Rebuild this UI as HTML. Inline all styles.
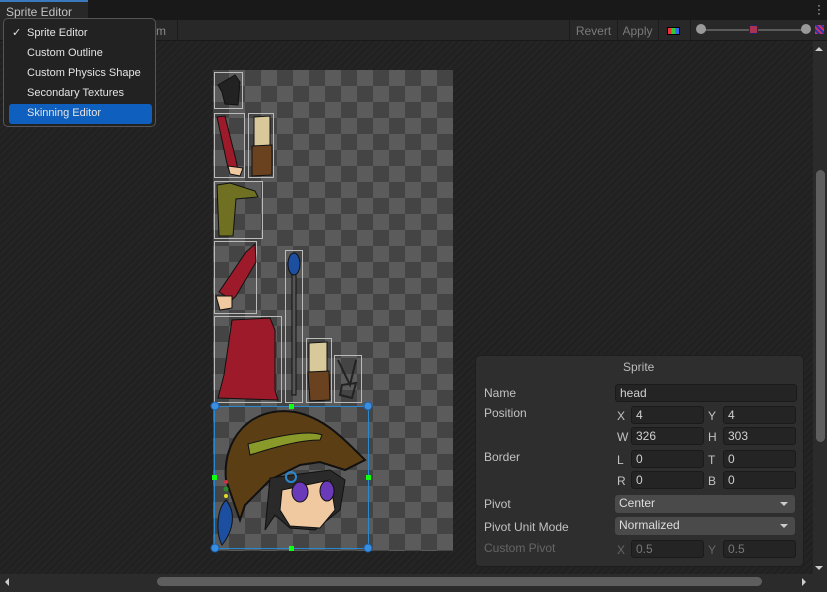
<!DOCTYPE html>
<html><head><meta charset="utf-8"><style>
*{margin:0;padding:0;box-sizing:border-box}
body{width:827px;height:592px;overflow:hidden;background:#232323;font-family:"Liberation Sans",sans-serif;font-size:12px;color:#c8c8c8;position:relative}
.bg{position:absolute;left:0;top:41px;width:827px;height:551px;background:repeating-linear-gradient(135deg,#242424 0 3px,#202020 3px 5px)}
.abs{position:absolute}
.tabbar{left:0;top:0;width:827px;height:20px;background:#191919}
.tab{left:0;top:0;width:88px;height:20px;background:#282828;border-top:2px solid #3a79bb;color:#c4c4c4;font-size:12px;padding:3px 0 0 6px}
.tool{left:0;top:20px;width:827px;height:21px;background:#282828;border-bottom:1px solid #191919}
.btn{top:20px;height:20px;color:#7a7a7a;font-size:12px;padding-top:4px;border-left:1px solid #1c1c1c}
.checker{left:213px;top:70px;width:240px;height:481px;background-color:#444;background-image:conic-gradient(#5b5b5b 25%,#444 0 50%,#5b5b5b 0 75%,#444 0);background-size:32px 32px}
.menu{left:3px;top:18px;width:153px;height:109px;background:#222;border:1px solid #555;border-radius:5px}
.mi{position:absolute;left:23px;color:#e4e4e4;font-size:11px}
.panel{left:475px;top:355px;width:329px;height:212px;background:#2e2e2e;border:1px solid #1e1e1e;border-radius:5px}
.lbl{position:absolute;font-size:12px;color:#c2c2c2}
.fld{position:absolute;height:18px;background:#2a2a2a;background:#242424;border:1px solid #1a1a1a;border-radius:3px;font-size:12px;color:#d0d0d0;padding:1px 0 0 4px}
.dd{position:absolute;height:18px;background:#4a4a4a;border-radius:3px;font-size:12px;color:#ddd;padding:1px 0 0 4px}
.dd:after{content:"";position:absolute;right:7px;top:7px;border:4px solid transparent;border-top:4px solid #ccc;border-bottom:0}
</style></head><body>
<div class="bg"></div>
<div class="abs tabbar"></div>
<div class="abs tab">Sprite Editor</div>
<div class="abs" style="right:6px;top:3px;color:#ccc;font-size:12px;line-height:4px">·<br>·<br>·</div>
<div class="abs tool"></div>
<div class="abs btn" style="left:156px;width:22px;border-left:0;border-right:1px solid #1c1c1c;color:#8a8a8a">m</div>
<div class="abs btn" style="left:569px;width:48px;text-align:center">Revert</div>
<div class="abs btn" style="left:617px;width:40px;text-align:center">Apply</div>
<div class="abs btn" style="left:658px;width:33px;border-right:1px solid #1c1c1c"></div>
<div class="abs" style="left:667px;top:27px;width:13px;height:8px;border:1px solid #000;background:linear-gradient(90deg,#e33 0 33%,#3c3 33% 66%,#36e 66%)"></div>
<div class="abs" style="left:700px;top:29px;width:110px;height:2px;background:#5a5a5a"></div>
<div class="abs" style="left:696px;top:24px;width:10px;height:10px;border-radius:50%;background:#999"></div>
<div class="abs" style="left:749px;top:25px;width:9px;height:9px;background:#a35;border:1px solid #226"></div>
<div class="abs" style="left:801px;top:24px;width:10px;height:10px;border-radius:50%;background:#999"></div>
<div class="abs" style="left:815px;top:25px;width:9px;height:9px;background:repeating-linear-gradient(45deg,#c36 0 2px,#33a 2px 4px)"></div>

<div class="abs checker"></div>
<svg class="abs" style="left:205px;top:65px" width="180" height="495" viewBox="205 65 180 495">
<g fill="none" stroke="#bbb" stroke-width="1">
<rect x="214.5" y="72.5" width="28" height="36"/>
<rect x="214.5" y="113.5" width="30" height="64"/>
<rect x="248.5" y="113.5" width="25" height="64"/>
<rect x="214.5" y="181.5" width="48" height="57"/>
<rect x="214.5" y="241.5" width="42" height="72"/>
<rect x="214.5" y="316.5" width="67" height="86"/>
<rect x="285.5" y="250.5" width="17" height="152"/>
<rect x="306.5" y="338.5" width="25" height="64"/>
<rect x="334.5" y="355.5" width="27" height="47"/>
</g>
<path d="M218 85 L235 75 L240 82 L238 105 L225 104 L222 92 Z" fill="#222" stroke="#111"/>
<path d="M217 117 L225 116 L236 160 L238 170 L228 168 Z" fill="#9c1a2a" stroke="#111"/>
<path d="M228 166 L243 168 L240 176 L230 174 Z" fill="#f0c9a0" stroke="#111"/>
<path d="M254 117 L270 116 L270 146 L254 147 Z" fill="#d8c89a" stroke="#111"/>
<path d="M252 146 L272 145 L272 175 L252 176 Z" fill="#6b4220" stroke="#111"/>
<path d="M217 185 L230 183 L255 191 L258 197 L236 199 L233 236 L219 236 Z" fill="#6f7022" stroke="#111"/>
<path d="M255 244 L256 262 L236 296 L232 300 L219 292 L246 252 Z" fill="#9c1a2a" stroke="#111"/>
<path d="M216 296 L232 296 L232 308 L220 310 Z" fill="#f0c9a0" stroke="#111"/>
<path d="M232 320 L270 318 L275 330 L275 390 L278 400 L218 398 L224 375 Z" fill="#9c1a2a" stroke="#111"/>
<rect x="292" y="270" width="4" height="125" fill="#555" stroke="#111"/>
<ellipse cx="294" cy="264" rx="6" ry="11" fill="#1c4fa0" stroke="#111"/>
<path d="M309 343 L327 342 L327 372 L309 373 Z" fill="#d8c89a" stroke="#111"/>
<path d="M308 372 L329 371 L330 400 L310 401 Z" fill="#6b4220" stroke="#111"/>
<path d="M338 360 L350 385 L356 360 M342 385 L356 383 L352 398 L340 395 Z" fill="none" stroke="#222" stroke-width="2"/>
<path d="M226 480 C222 440 250 405 295 412 C325 418 345 440 365 460 L345 470 L320 462 L300 465 L270 480 L245 505 L240 520 Z" fill="#5c3e14" stroke="#111" stroke-width="2"/>
<path d="M248 444 C280 435 310 430 322 435 L320 440 C300 440 275 447 250 455 Z" fill="#8a9a2a" stroke="#111"/>
<path d="M270 478 L330 470 L345 480 L340 510 L315 530 L290 528 L275 515 L265 530 Z" fill="#2a2a2a" stroke="#111"/>
<path d="M282 490 L330 480 L335 510 L320 528 L290 526 L280 510 Z" fill="#f0c9a0" stroke="#111"/>
<ellipse cx="300" cy="492" rx="8" ry="10" fill="#6a3ab8" stroke="#111"/>
<ellipse cx="327" cy="491" rx="7" ry="10" fill="#6a3ab8" stroke="#111"/>
<path d="M226 500 C216 510 216 535 222 545 C234 530 236 512 226 500 Z" fill="#1c4fa0" stroke="#111"/>
<circle cx="226" cy="489" r="2.5" fill="#2a8a2a"/><circle cx="226" cy="496" r="2" fill="#dd2"/><circle cx="226" cy="482" r="2" fill="#c34"/>
<rect x="214.5" y="406.5" width="154" height="142" fill="none" stroke="#2a88d0" stroke-width="1"/>
<g fill="#3a8ee0" stroke="#1a5fa8"><circle cx="215" cy="406" r="4"/><circle cx="368" cy="406" r="4"/><circle cx="215" cy="548" r="4"/><circle cx="368" cy="548" r="4"/></g>
<g fill="#1f1"><rect x="289" y="404" width="5" height="5"/><rect x="289" y="546" width="5" height="5"/><rect x="212" y="475" width="5" height="5"/><rect x="366" y="475" width="5" height="5"/></g>
<circle cx="291" cy="477" r="5" fill="none" stroke="#2a88d0" stroke-width="2"/>
</svg>

<div class="abs menu">
<div class="mi" style="left:8px;top:7px">✓</div>
<div class="mi" style="top:8px">Sprite Editor</div>
<div class="mi" style="top:28px">Custom Outline</div>
<div class="mi" style="top:48px">Custom Physics Shape</div>
<div class="mi" style="top:68px">Secondary Textures</div>
<div class="abs" style="left:5px;top:85px;width:143px;height:20px;background:#0f5fbf;border-radius:3px"></div>
<div class="mi" style="top:88px">Skinning Editor</div>
</div>

<div class="abs panel">
<div class="lbl" style="left:147px;top:4px;color:#bbb">Sprite</div>
<div class="lbl" style="left:8px;top:30px">Name</div>
<div class="fld" style="left:139px;top:28px;width:182px">head</div>
<div class="lbl" style="left:8px;top:50px">Position</div>
<div class="lbl" style="left:141px;top:53px">X</div><div class="fld" style="left:155px;top:50px;width:73px">4</div>
<div class="lbl" style="left:232px;top:53px">Y</div><div class="fld" style="left:247px;top:50px;width:73px">4</div>
<div class="lbl" style="left:141px;top:74px">W</div><div class="fld" style="left:155px;top:71px;width:73px">326</div>
<div class="lbl" style="left:232px;top:74px">H</div><div class="fld" style="left:247px;top:71px;width:73px">303</div>
<div class="lbl" style="left:8px;top:94px">Border</div>
<div class="lbl" style="left:141px;top:97px">L</div><div class="fld" style="left:155px;top:94px;width:73px">0</div>
<div class="lbl" style="left:232px;top:97px">T</div><div class="fld" style="left:247px;top:94px;width:73px">0</div>
<div class="lbl" style="left:141px;top:118px">R</div><div class="fld" style="left:155px;top:115px;width:73px">0</div>
<div class="lbl" style="left:232px;top:118px">B</div><div class="fld" style="left:247px;top:115px;width:73px">0</div>
<div class="lbl" style="left:8px;top:141px">Pivot</div>
<div class="dd" style="left:139px;top:139px;width:180px">Center</div>
<div class="lbl" style="left:8px;top:164px">Pivot Unit Mode</div>
<div class="dd" style="left:139px;top:161px;width:180px">Normalized</div>
<div class="lbl" style="left:8px;top:185px;color:#666">Custom Pivot</div>
<div class="lbl" style="left:141px;top:187px;color:#666">X</div><div class="fld" style="left:155px;top:184px;width:73px;color:#777">0.5</div>
<div class="lbl" style="left:232px;top:187px;color:#666">Y</div><div class="fld" style="left:247px;top:184px;width:73px;color:#777">0.5</div>
</div>

<div class="abs" style="left:813px;top:41px;width:14px;height:533px;background:#2b2b2b"></div>
<div class="abs" style="left:816px;top:170px;width:9px;height:272px;background:#5e5e5e;border-radius:5px"></div>
<div class="abs" style="left:815px;top:47px;border:4px solid transparent;border-bottom:4px solid #ccc;border-top:0"></div>
<div class="abs" style="left:815px;top:566px;border:4px solid transparent;border-top:4px solid #ccc;border-bottom:0"></div>
<div class="abs" style="left:0;top:574px;width:827px;height:18px;background:#2b2b2b"></div>
<div class="abs" style="left:157px;top:577px;width:605px;height:9px;background:#5e5e5e;border-radius:5px"></div>
<div class="abs" style="left:5px;top:578px;border:4px solid transparent;border-right:4px solid #ccc;border-left:0"></div>
<div class="abs" style="left:802px;top:578px;border:4px solid transparent;border-left:4px solid #ccc;border-right:0"></div>
</body></html>
